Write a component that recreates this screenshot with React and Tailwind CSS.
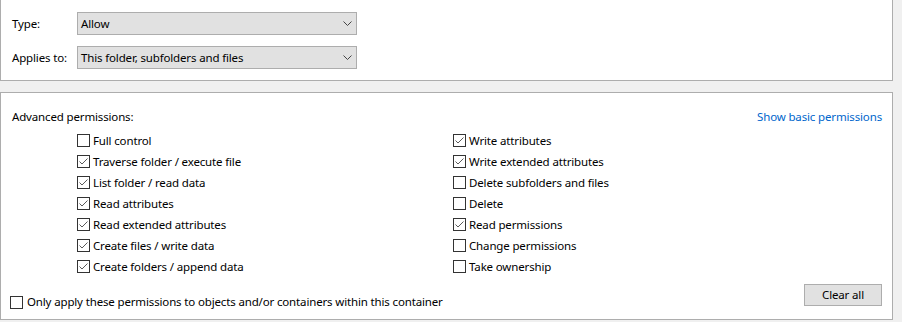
const leftPerms = [
  ['Full control', false],
  ['Traverse folder / execute file', true],
  ['List folder / read data', true],
  ['Read attributes', true],
  ['Read extended attributes', true],
  ['Create files / write data', true],
  ['Create folders / append data', true],
];

const rightPerms = [
  ['Write attributes', true],
  ['Write extended attributes', true],
  ['Delete subfolders and files', false],
  ['Delete', false],
  ['Read permissions', true],
  ['Change permissions', false],
  ['Take ownership', false],
];

function Box({ checked }) {
  return (
    <span className="flex h-[13px] w-[13px] shrink-0 items-center justify-center border border-[#333333] bg-white">
      {checked && (
        <svg width="11" height="11" viewBox="0 0 11 11">
          <polyline points="1.5,5.5 4,8 9.5,2.5" fill="none" stroke="#5a5a5a" strokeWidth="1" />
        </svg>
      )}
    </span>
  );
}

function Check({ label, checked }) {
  return (
    <div className="flex h-[21px] items-center gap-[3px]">
      <Box checked={checked} />
      <span>{label}</span>
    </div>
  );
}

function Select({ value }) {
  return (
    <div className="flex h-[23px] w-[280px] items-center justify-between border border-[#adadad] bg-[#e1e1e1] pl-[3px] pr-[4px]">
      <span>{value}</span>
      <svg width="9" height="5" viewBox="0 0 9 5">
        <polyline points="0.5,0.5 4.5,4.5 8.5,0.5" fill="none" stroke="#444" strokeWidth="1" />
      </svg>
    </div>
  );
}

export default function App() {
  return (
    <div className="h-[322px] w-[902px] overflow-hidden bg-[#f0f0f0] text-[11.5px] leading-[16px] tracking-[-0.15px] text-black" style={{ fontFamily: '"Segoe UI", "Noto Sans", sans-serif' }}>
      <div className="flex h-[81px] w-[893px] flex-col gap-[11px] border-x border-b border-[#adadad] bg-white pl-[11px] pt-[12px]">
        <div className="flex items-center">
          <span className="w-[65px]">Type:</span>
          <Select value="Allow" />
        </div>
        <div className="flex items-center">
          <span className="w-[65px]">Applies to:</span>
          <Select value="This folder, subfolders and files" />
        </div>
      </div>

      <div className="mt-[11px] flex h-[228px] w-[893px] flex-col border border-[#adadad] bg-white pt-[16px]">
        <div className="flex justify-between pl-[11px] pr-[10px]">
          <span>Advanced permissions:</span>
          <a className="text-[#0066cc]">Show basic permissions</a>
        </div>

        <div className="mt-[5px] flex pl-[76px]">
          <div className="w-[376px]">
            {leftPerms.map(([label, checked]) => (
              <Check key={label} label={label} checked={checked} />
            ))}
          </div>
          <div>
            {rightPerms.map(([label, checked]) => (
              <Check key={label} label={label} checked={checked} />
            ))}
          </div>
        </div>

        <div className="mt-[7px] flex items-start justify-between pl-[9px] pr-[10px]">
          <div className="mt-[10px] flex items-center gap-[4px]">
            <Box checked={false} />
            <span>Only apply these permissions to objects and/or containers within this container</span>
          </div>
          <button className="h-[22px] w-[78px] border border-[#adadad] bg-[#e1e1e1]">Clear all</button>
        </div>
      </div>
    </div>
  );
}
